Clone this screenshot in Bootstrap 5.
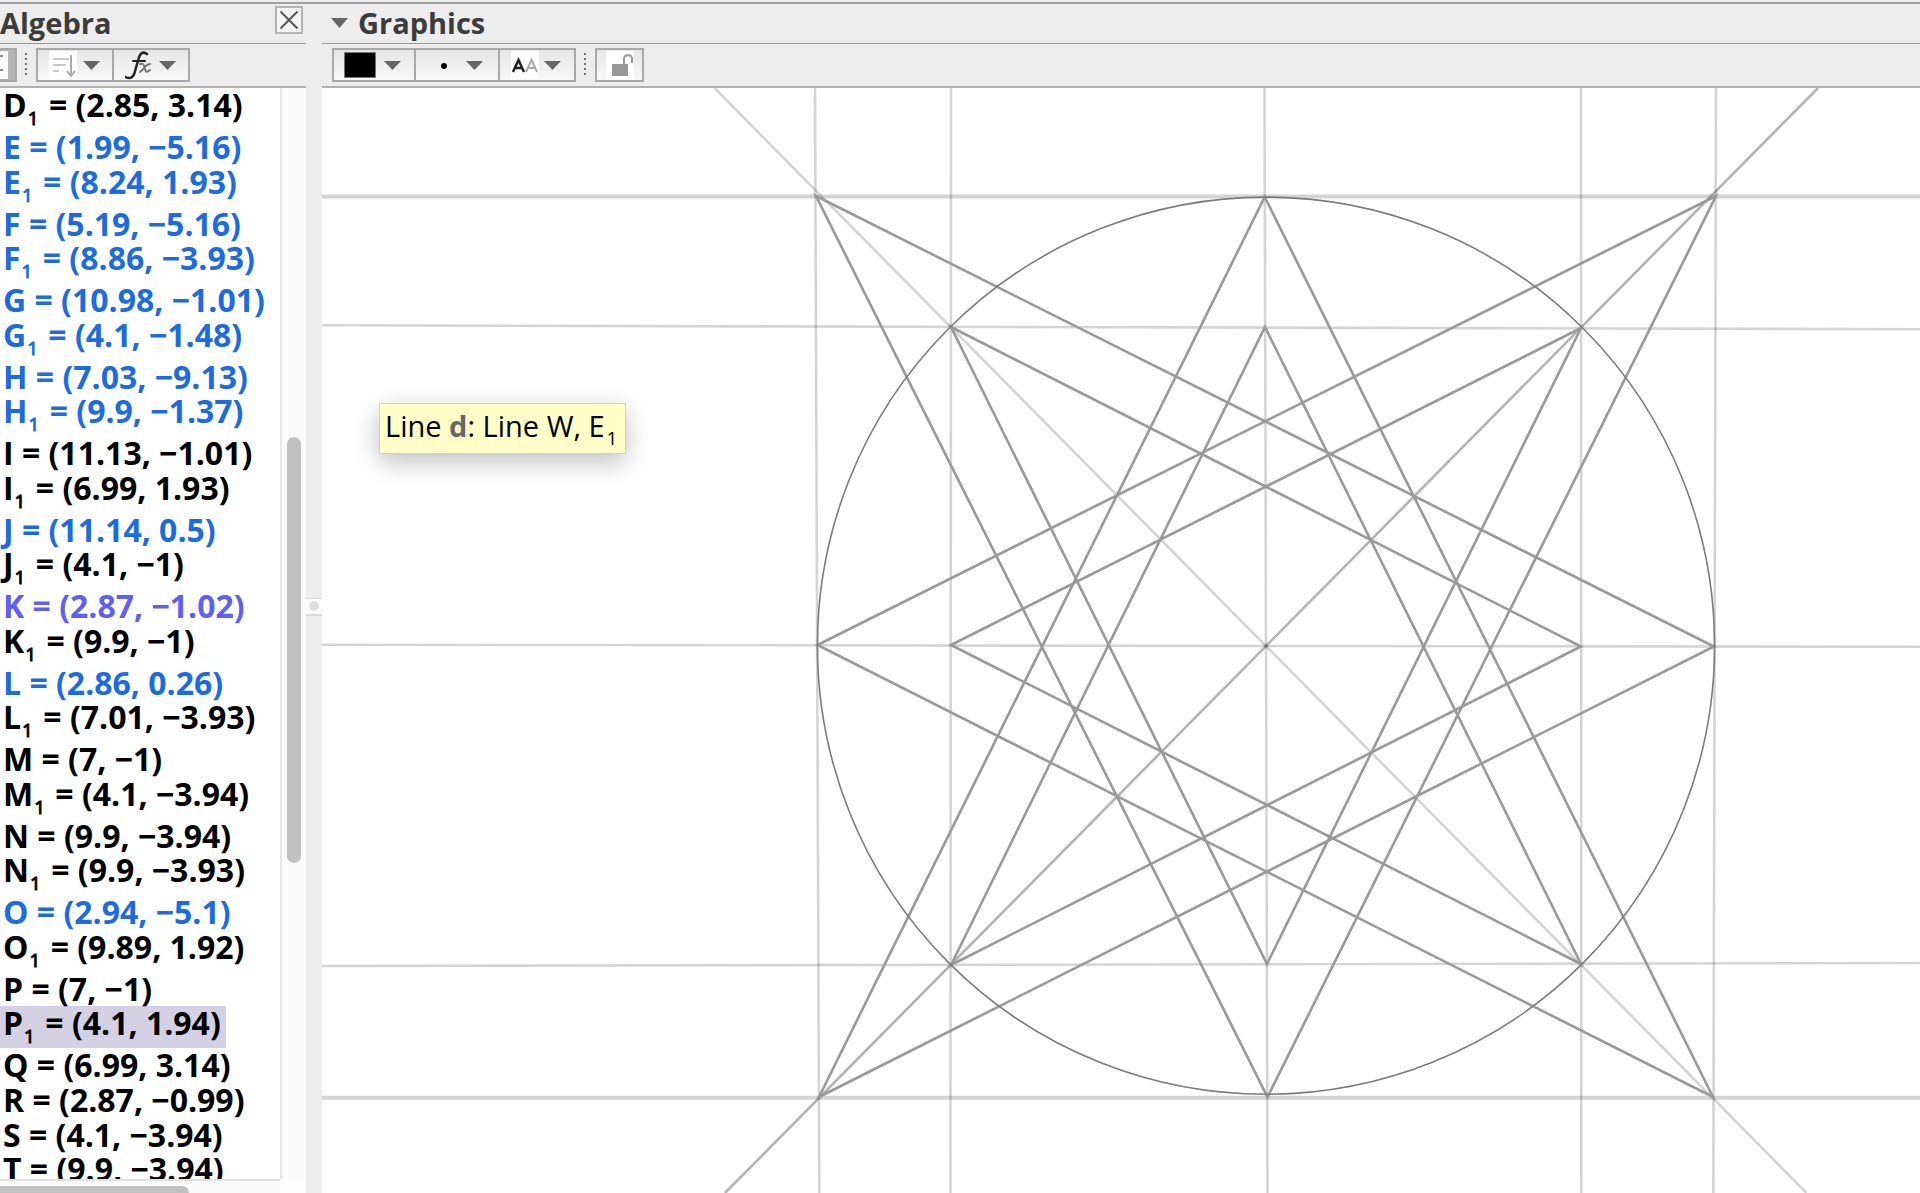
<!DOCTYPE html>
<html lang="en">
<head>
<meta charset="utf-8">
<meta name="viewport" content="width=device-width, initial-scale=1">
<title>Algebra and Graphics</title>
<link href="https://cdn.jsdelivr.net/npm/bootstrap@5.3.0/dist/css/bootstrap.min.css" rel="stylesheet">
<style>
  body { font-family: "Open Sans", "Noto Sans", sans-serif; background: #ededed; color: #000; border-top: 2px solid #ededed; }
  .workspace { border-top: 2px solid #a0a0a0; }
  .algebra-pane { width: 306px; }
  .splitter { width: 16px; background: #ededed; }
  .grip { width: 16px; height: 18px; background: #fdfdfd; border-top: 1px solid #d8d8d8; border-bottom: 2px solid #d8d8d8; }
  .grip span { width: 10px; height: 10px; background: #dedede; }
  .pane-head { height: 40px; padding-bottom: 2px; border-bottom: 1px solid #989898; }
  .pane-title { font-size: 29px; line-height: 36px; font-weight: 700; color: #3c3c3c; }
  .close-btn { width: 28px; height: 28px; border: 2px solid #b4b4b4; background: #f5f5f5; margin: 0 3px 6px 0; }
  .tool-row { height: 44px; border-bottom: 2px solid #b0b0b0; }
  .tool { height: 34px; border: 2px solid #a8a8a8; background: linear-gradient(#e6e6e6, #f8f8f8); }
  .tool + .tool { border-left-width: 0; }
  .tool-cut { width: 17px; border-left: 0; background: #b4b4b4; }
  .tool-cut svg { background: #fff; }
  .w-first { width: 78px; }
  .w-next { width: 76px; }
  .w-wide { width: 84px; }
  .w-lock { width: 49px; }
  .lead-in { padding-left: 10px; }
  .dots { width: 2px; height: 24px; margin: 0 9px 0 8px; background: repeating-linear-gradient(#707070 0 2px, transparent 2px 5px); }
  .objects { font-size: 32px; font-weight: 700; background: #fff; }
  .objects li { height: 35px; line-height: 33px; padding: 0 5px 0 3px; white-space: nowrap; width: max-content; }
  .objects li:nth-child(4n) { height: 34px; }
  .objects li.has-sub { height: 42px; }
  .objects sub, .tip sub { font-size: 19px; font-weight: 400; line-height: 0; bottom: -8px; vertical-align: baseline; }
  .objects sub { margin: 0 2px 0 1px; -webkit-text-stroke: 1px; }
  .free { color: #1c6ce0; }
  .on-path { color: #6060f0; }
  .picked { background: #d3d1e3; }
  .v-track { width: 26px; background: #fafafa; border-left: 2px solid #e6e6e6; padding: 349px 5px 0 5px; }
  .v-thumb { height: 426px; background: #c1c1c1; }
  .h-row { height: 14px; background: #fdfdfd; }
  .h-track { width: 280px; background: #fafafa; border-top: 2px solid #e2e2e2; padding-top: 5px; }
  .h-thumb { width: 189px; height: 14px; background: #c1c1c1; border-top-right-radius: 7px; }
  .board { background: #fff; }
  .tip { left: 57px; top: 315px; height: 51px; padding: 0 8px 0 5px; border: 1px solid #cfcfcf; background: #ffffc8; font-size: 29px; line-height: 43px; box-shadow: 0 8px 24px rgba(0,0,0,.25); white-space: nowrap; }
  .tip sub { margin-left: 2px; }
  .tip b { color: #666; }
</style>
<script src="https://cdn.jsdelivr.net/npm/bootstrap@5.3.0/dist/js/bootstrap.bundle.min.js"></script>
</head>
<body class="vh-100 overflow-hidden d-flex flex-column">
<main class="workspace d-flex flex-grow-1 overflow-hidden">
  <section class="algebra-pane d-flex flex-column flex-shrink-0 overflow-hidden" aria-label="Algebra">
    <header class="pane-head d-flex align-items-center justify-content-between flex-shrink-0">
      <h2 class="pane-title m-0">Algebra</h2>
      <button class="close-btn p-0 d-flex align-items-center justify-content-center" type="button" aria-label="Close">
        <svg width="20" height="20" viewBox="0 0 20 20" stroke="#555" stroke-width="2"><path d="M1.500 1.500 18.500 18.500M18.500 1.500 1.500 18.500"/></svg>
      </button>
    </header>
    <div class="tool-row d-flex align-items-center flex-shrink-0">
      <button class="tool tool-cut p-0 d-flex align-items-center" type="button" aria-label="Auxiliary objects">
        <svg width="8" height="28" viewBox="0 0 8 28"><path d="M0 5h3M0 19h3" stroke="#888" stroke-width="2"/></svg>
      </button>
      <span class="dots"></span>
      <button class="tool w-first p-0 d-flex align-items-center justify-content-center" type="button" aria-label="Sort by">
        <svg width="32" height="28" viewBox="0 0 32 28"><path fill="#fff" d="M0 0h28v28H0z"/><path d="M4 8h16M4 14h13M4 20h6" stroke="#c8c8c8" stroke-width="2"/><path d="M22 4v20M18 20l4 5 4-5" fill="none" stroke="#aaa" stroke-width="2"/></svg>
        <svg width="20" height="12" viewBox="0 0 20 12"><path d="M2 2h17l-8.500 9z" fill="#666"/></svg>
      </button>
      <button class="tool w-next p-0 d-flex align-items-center justify-content-center" type="button" aria-label="Function">
        <svg width="32" height="30" viewBox="2 0 32 30" fill="none" stroke="#222" stroke-linecap="round"><path d="M24 4c-4-3-7-1-8.500 5l-4 14c-1.500 5-5 6-9 4" stroke-width="2.500"/><path d="M10 11h12" stroke-width="2"/><path d="M17 14c4-1 4 1 5 5s2 3 5 1M27 14c-4 0-5 4-10 8" stroke="#777" stroke-width="2"/></svg>
        <svg width="20" height="12" viewBox="0 0 20 12"><path d="M2 2h17l-8.500 9z" fill="#666"/></svg>
      </button>
    </div>
    <div class="d-flex flex-grow-1 overflow-hidden">
      <ul class="objects list-unstyled m-0 flex-grow-1 overflow-hidden">
        <li class="has-sub">D<sub>1</sub> = (2.85, 3.14)</li>
        <li class="free">E = (1.99, −5.16)</li>
        <li class="has-sub free">E<sub>1</sub> = (8.24, 1.93)</li>
        <li class="free">F = (5.19, −5.16)</li>
        <li class="has-sub free">F<sub>1</sub> = (8.86, −3.93)</li>
        <li class="free">G = (10.98, −1.01)</li>
        <li class="has-sub free">G<sub>1</sub> = (4.1, −1.48)</li>
        <li class="free">H = (7.03, −9.13)</li>
        <li class="has-sub free">H<sub>1</sub> = (9.9, −1.37)</li>
        <li>I = (11.13, −1.01)</li>
        <li class="has-sub">I<sub>1</sub> = (6.99, 1.93)</li>
        <li class="free">J = (11.14, 0.5)</li>
        <li class="has-sub">J<sub>1</sub> = (4.1, −1)</li>
        <li class="on-path">K = (2.87, −1.02)</li>
        <li class="has-sub">K<sub>1</sub> = (9.9, −1)</li>
        <li class="free">L = (2.86, 0.26)</li>
        <li class="has-sub">L<sub>1</sub> = (7.01, −3.93)</li>
        <li>M = (7, −1)</li>
        <li class="has-sub">M<sub>1</sub> = (4.1, −3.94)</li>
        <li>N = (9.9, −3.94)</li>
        <li class="has-sub">N<sub>1</sub> = (9.9, −3.93)</li>
        <li class="free">O = (2.94, −5.1)</li>
        <li class="has-sub">O<sub>1</sub> = (9.89, 1.92)</li>
        <li>P = (7, −1)</li>
        <li class="has-sub picked">P<sub>1</sub> = (4.1, 1.94)</li>
        <li>Q = (6.99, 3.14)</li>
        <li>R = (2.87, −0.99)</li>
        <li>S = (4.1, −3.94)</li>
        <li>T = (9.9, −3.94)</li>
      </ul>
      <div class="v-track flex-shrink-0"><div class="v-thumb rounded-pill"></div></div>
    </div>
    <div class="h-row flex-shrink-0 overflow-hidden"><div class="h-track"><div class="h-thumb"></div></div></div>
  </section>

  <div class="splitter d-flex align-items-center flex-shrink-0 pt-3">
    <div class="grip d-flex align-items-center justify-content-center"><span class="rounded-circle"></span></div>
  </div>

  <section class="d-flex flex-column flex-grow-1 overflow-hidden" aria-label="Graphics">
    <header class="pane-head d-flex align-items-center flex-shrink-0 ps-2 gap-2">
      <svg width="20" height="12" viewBox="0 0 20 12"><path d="M1 1h17l-8.500 10z" fill="#666"/></svg>
      <h2 class="pane-title m-0">Graphics</h2>
    </header>
    <div class="tool-row lead-in d-flex align-items-center flex-shrink-0">
      <button class="tool w-wide p-0 d-flex align-items-center justify-content-center gap-2" type="button" aria-label="Colour">
        <svg width="32" height="26" viewBox="0 0 32 26"><path d="M.5.5h31v25H.5z" fill="#000" stroke="#777"/></svg>
        <svg width="20" height="12" viewBox="0 0 20 12"><path d="M0 2h17l-8.500 9z" fill="#666"/></svg>
      </button>
      <button class="tool w-wide p-0 d-flex align-items-center justify-content-center gap-1" type="button" aria-label="Point style">
        <svg width="30" height="28" viewBox="0 0 30 28"><circle cx="14" cy="15" r="3"/></svg>
        <svg width="20" height="12" viewBox="0 0 20 12"><path d="M2 2h17l-8.500 9z" fill="#666"/></svg>
      </button>
      <button class="tool w-next p-0 d-flex align-items-center justify-content-center gap-1" type="button" aria-label="Labelling">
        <svg width="28" height="28" viewBox="0 0 28 28"><path fill="#fff" d="M0 0h28v28H0z"/><g fill="none" stroke-width="2"><path d="M2 21 7.500 9 13 21M4 17h7" stroke="#222" stroke-width="2.500"/><path d="M15 21 20.500 9 26 21M17 17h7" stroke="#aaa"/></g></svg>
        <svg width="20" height="12" viewBox="0 0 20 12"><path d="M1 2h17l-8.500 9z" fill="#666"/></svg>
      </button>
      <span class="dots"></span>
      <button class="tool w-lock p-0 d-flex align-items-center justify-content-center" type="button" aria-label="Unlock">
        <svg width="28" height="28" viewBox="0 0 28 28"><path fill="#fff" d="M0 0h28v28H0z"/><path d="M6 13h16v12H6z" fill="#999"/><path d="M18 13V8c0-5 8-5 8 0v4" fill="none" stroke="#999" stroke-width="2"/></svg>
      </button>
    </div>
    <div class="board position-relative flex-grow-1 overflow-hidden">
      <svg class="d-block w-100 h-100" viewBox="322 88 1598 1105" preserveAspectRatio="xMinYMin slice" fill="none">
        <g stroke="#000" stroke-opacity=".17" stroke-width="2.600">
          <path d="M815 88 819.300 1193"/><path d="M951 88 950.500 1193"/><path d="M1264.500 88 1267.500 1193"/><path d="M1581 88 1581.300 1193"/><path d="M1716 88 1713.300 1193"/>
          <path d="M322 325.300 1920 329.200"/><path d="M322 644.700 1920 646.800"/><path d="M322 966 1920 963"/>
          <path d="M714.500 88 1806.500 1193"/>
          <path d="M322 196.500H1920M322 1097.700H1920" stroke-width="4"/>
        </g>
        <path d="M1818 88 725 1193" stroke="#000" stroke-opacity=".3" stroke-width="2.600"/>
        <g stroke="#999" stroke-width="2.600">
          <path d="M817.500 645 1716 196 1267.500 1097 816 196 1714 646.500 819 1097 1264.700 197 1713 1097z"/>
          <path d="M951 645 1581 328 1267 964 951 327 1581 646.500 951 965 1265 327 1581 964z"/>
        </g>
        <circle cx="1266" cy="645.700" r="448.600" stroke="#7c7c7c" stroke-width="1.600"/>
      </svg>
      <div class="tip position-absolute" role="tooltip">Line <b>d</b>: Line W, E<sub>1</sub></div>
    </div>
  </section>
</main>
</body>
</html>
